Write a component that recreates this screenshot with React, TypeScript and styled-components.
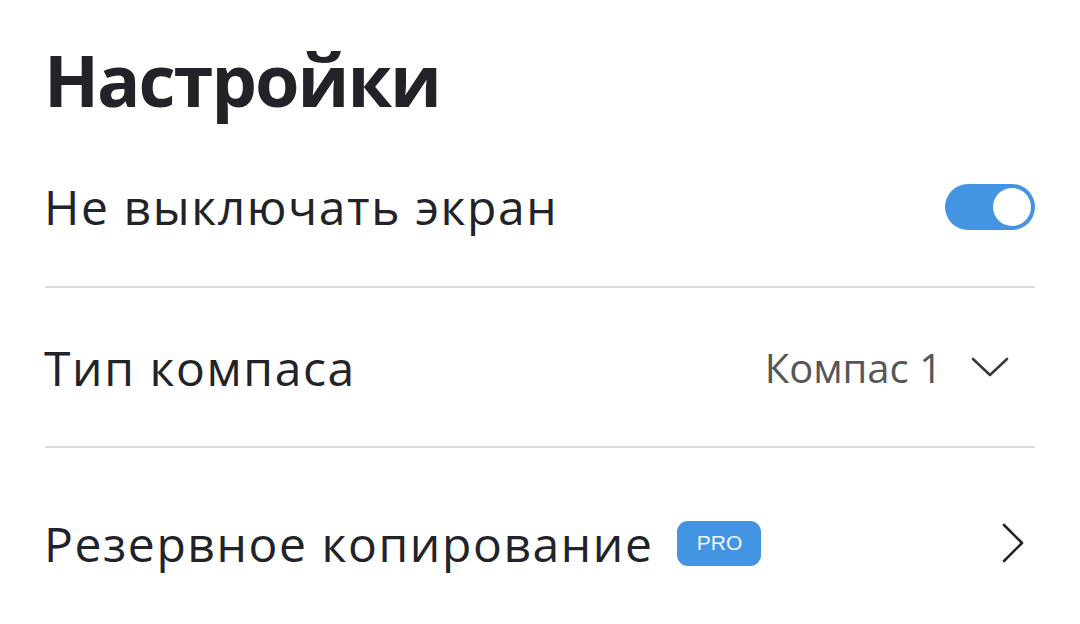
import React from "react";
import styled, { createGlobalStyle } from "styled-components";

const Global = createGlobalStyle`
  html, body { margin: 0; padding: 0; background: #ffffff; }
  body { font-family: "Open Sans", "Noto Sans", sans-serif; color: #222328; }
`;

const Page = styled.div`
  width: 1080px;
  height: 624px;
  box-sizing: border-box;
  padding: 0 45px 0 45px;
  overflow: hidden;
`;

const Title = styled.h1`
  margin: 0 0 0 -1px;
  padding-top: 31px;
  font-size: 72px;
  line-height: 96px;
  font-weight: 700;
  color: #222328;
  letter-spacing: -2px;
`;

const Row = styled.div<{ $h: number }>`
  display: flex;
  align-items: center;
  height: ${(p) => p.$h}px;
  box-sizing: border-box;
`;

const Divider = styled.div`
  height: 2px;
  background: #dcdcdc;
`;

const Label = styled.span`
  font-size: 48px;
  font-weight: 400;
  color: #222328;
  letter-spacing: 1.6px;
  margin-left: -1px;
`;

const Spacer = styled.div`
  flex: 1;
`;

const Toggle = styled.div<{ $on: boolean }>`
  width: 90px;
  height: 46px;
  border-radius: 23px;
  background: ${(p) => (p.$on ? "#4395e4" : "#ccc")};
  display: flex;
  align-items: center;
  justify-content: ${(p) => (p.$on ? "flex-end" : "flex-start")};
  padding: 0 4px;
  box-sizing: border-box;
`;

const Knob = styled.div`
  width: 38px;
  height: 38px;
  border-radius: 50%;
  background: #fff;
`;

const Value = styled.span`
  font-size: 40px;
  color: #55565a;
  margin-right: 28px;
`;

const Badge = styled.span`
  margin-left: 24px;
  width: 84px;
  height: 45px;
  border-radius: 11px;
  background: #4395e4;
  color: #eef5ff;
  font-family: "Liberation Sans", Arial, sans-serif;
  font-size: 21px;
  display: flex;
  align-items: center;
  justify-content: center;
`;

const Chevron = styled.svg<{ $mr: number }>`
  display: block;
  flex-shrink: 0;
  margin-right: ${(p) => p.$mr}px;
`;

export default function App() {
  return (
    <>
      <Global />
      <Page>
        <Title>Настройки</Title>
        <Row $h={159}>
          <Label>Не выключать экран</Label>
          <Spacer />
          <Toggle $on>
            <Knob />
          </Toggle>
        </Row>
        <Divider />
        <Row $h={158}>
          <Label>Тип компаса</Label>
          <Spacer />
          <Value>Компас 1</Value>
          <Chevron $mr={25} width="40" height="24" viewBox="0 0 40 24">
            <path d="M3 4 L20 20 L37 4" fill="none" stroke="#3a3b3f" strokeWidth="2.6" strokeLinecap="round" strokeLinejoin="round" />
          </Chevron>
        </Row>
        <Divider />
        <Row $h={190}>
          <Label>Резервное копирование</Label>
          <Badge>PRO</Badge>
          <Spacer />
          <Chevron $mr={10} width="24" height="40" viewBox="0 0 24 40">
            <path d="M3 2 L21 20 L3 38" fill="none" stroke="#222328" strokeWidth="2.6" strokeLinecap="round" strokeLinejoin="round" />
          </Chevron>
        </Row>
      </Page>
    </>
  );
}
